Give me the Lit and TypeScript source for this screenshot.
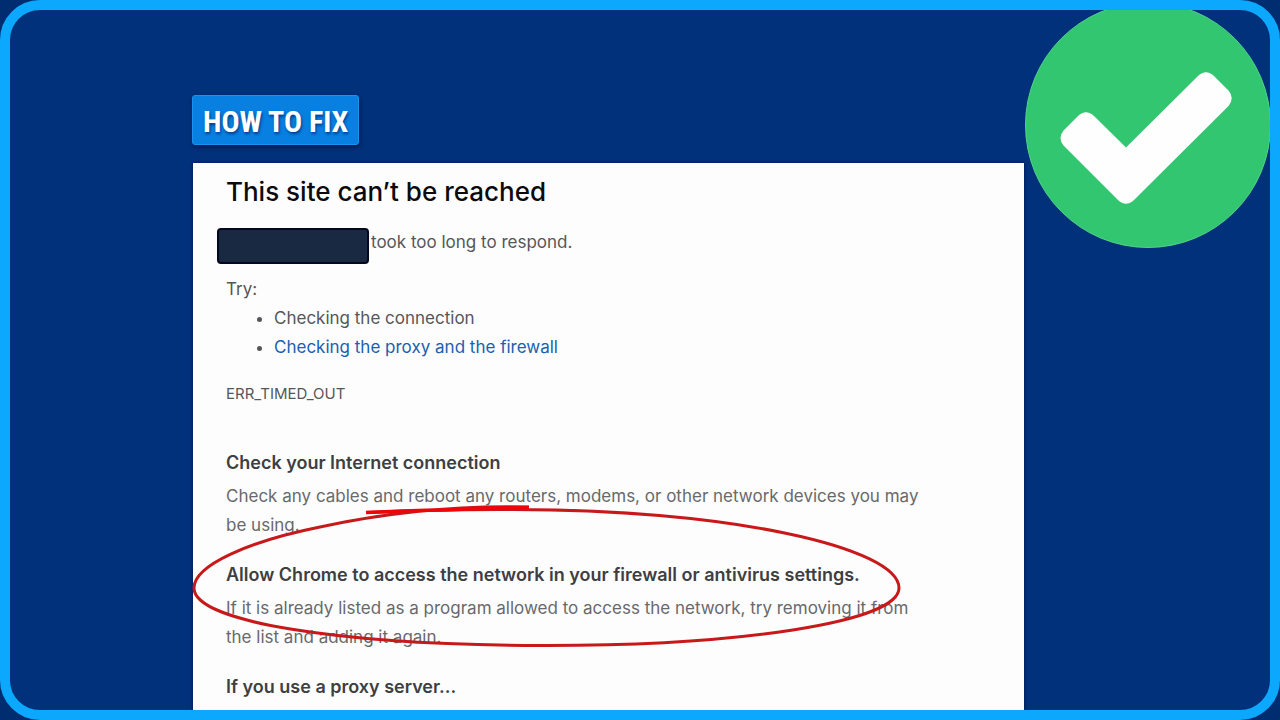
import { LitElement, html, css } from "lit";
import { customElement } from "lit/decorators.js";

interface Tip {
  title: string;
  body?: string;
}

const TIPS: Tip[] = [
  {
    title: "Check your Internet connection",
    body: "Check any cables and reboot any routers, modems, or other network devices you may be using.",
  },
  {
    title: "Allow Chrome to access the network in your firewall or antivirus settings.",
    body: "If it is already listed as a program allowed to access the network, try removing it from the list and adding it again.",
  },
  { title: "If you use a proxy server..." },
];

@customElement("error-page")
export class ErrorPage extends LitElement {
  static styles = css`
    :host {
      display: block;
      position: relative;
      box-sizing: border-box;
      padding: 12px 33px 0;
      background: #fdfdfd;
      color: #55565a;
      font: 17px/29px Inter, sans-serif;
      box-shadow: 0 0 3px #001048;
    }
    .title {
      margin: 0 0 19px;
      font-size: 26px;
      line-height: 34px;
      font-weight: 500;
      color: #0b0b0d;
    }
    .summary {
      display: flex;
      align-items: flex-start;
      gap: 2px;
      margin: 0 0 11px -9px;
    }
    .redacted {
      box-sizing: border-box;
      width: 152px;
      height: 36px;
      background: #1a2942;
      border: 2px solid #03081f;
      border-radius: 4px;
    }
    .text,
    .list {
      margin: 0;
    }
    .list {
      padding-left: 48px;
    }
    .link {
      color: #1a5fb0;
      text-decoration: none;
    }
    .code {
      margin: 22px 0 44px;
      font-size: 15px;
      line-height: 20px;
    }
    .tips {
      max-width: 712px;
    }
    .tip {
      margin-bottom: 20px;
    }
    .tip-title {
      margin: 0 0 5px;
      font-size: 18px;
      line-height: 29px;
      font-weight: 600;
      color: #3e3f42;
    }
    .tip .text {
      color: #68696c;
    }
    .marker {
      position: absolute;
      left: -3px;
      top: 337px;
      width: 714px;
      height: 150px;
      pointer-events: none;
    }
  `;

  render() {
    return html`
      <h1 class="title">This site can’t be reached</h1>
      <div class="summary">
        <span class="redacted"></span>
        <p class="text">took too long to respond.</p>
      </div>
      <p class="text">Try:</p>
      <ul class="list">
        <li>Checking the connection</li>
        <li><a class="link" href="#proxy">Checking the proxy and the firewall</a></li>
      </ul>
      <p class="code">ERR_TIMED_OUT</p>
      <div class="tips">
        ${TIPS.map(
          (tip) => html`
            <section class="tip">
              <h2 class="tip-title">${tip.title}</h2>
              ${tip.body ? html`<p class="text">${tip.body}</p>` : null}
            </section>
          `
        )}
      </div>
      <svg class="marker" viewBox="190 500 714 150" fill="none" aria-hidden="true">
        <path
          d="M529 507C450 505 380 514 320 527C250 541 194 565 194 588C194 622 340 645 540 645.500C740 646 899 622 899 588C899 548 730 508 500 509.500Q430 509.500 366 512.500"
          stroke="#c8181a"
          stroke-width="3"
        />
        <path d="M366 512.500Q420 510 445 510Q490 507.500 529 507.500" stroke="#ee0508" stroke-width="3.500" />
      </svg>
    `;
  }
}

@customElement("app-root")
export class AppRoot extends LitElement {
  static styles = css`
    :host {
      display: block;
      background: #002c70;
    }
    .frame {
      position: relative;
      box-sizing: border-box;
      height: 100vh;
      overflow: hidden;
      display: grid;
      grid-template-columns: 183fr 831fr 246fr;
      border: 10px solid #0ca8fe;
      border-radius: 40px;
      background: #00317a;
    }
    .column {
      grid-column: 2;
      min-width: 0;
      display: flex;
      flex-direction: column;
      align-items: flex-start;
      gap: 18px;
      padding-top: 85px;
    }
    .badge {
      box-sizing: border-box;
      height: 50px;
      margin-left: -1px;
      padding: 0 10px;
      border: 1px solid #1a92f0;
      border-radius: 3px;
      background: #0780e2;
      color: #fff;
      font: bold 30px/52px "Roboto Condensed", "Liberation Sans Narrow", Roboto, sans-serif;
      white-space: nowrap;
      text-shadow: 1px 2px 3px #003c8c;
      box-shadow: 1px 2px 4px #001a50;
    }
    .page {
      flex: 1;
      align-self: stretch;
    }
    .check {
      position: absolute;
      top: -8px;
      right: -1px;
      width: 247px;
      height: 247px;
    }
  `;

  render() {
    return html`
      <main class="frame">
        <div class="column">
          <div class="badge">HOW TO FIX</div>
          <error-page class="page"></error-page>
        </div>
        <svg class="check" viewBox="1024 2 247 247" role="img" aria-label="Fixed">
          <circle cx="1148" cy="125" r="122.500" fill="#33c670" stroke="#4fd389" />
          <path
            d="M1063.500 130.500L1078 116Q1086 108.500 1094 116L1126 147.500L1198 76Q1206 68.500 1214 76L1228.500 90.500Q1235 98 1228.500 106L1134 200Q1126 207.500 1118 200L1063.500 145.500Q1057.500 138 1063.500 130.500Z"
            fill="#fdfefd"
          />
        </svg>
      </main>
    `;
  }
}
